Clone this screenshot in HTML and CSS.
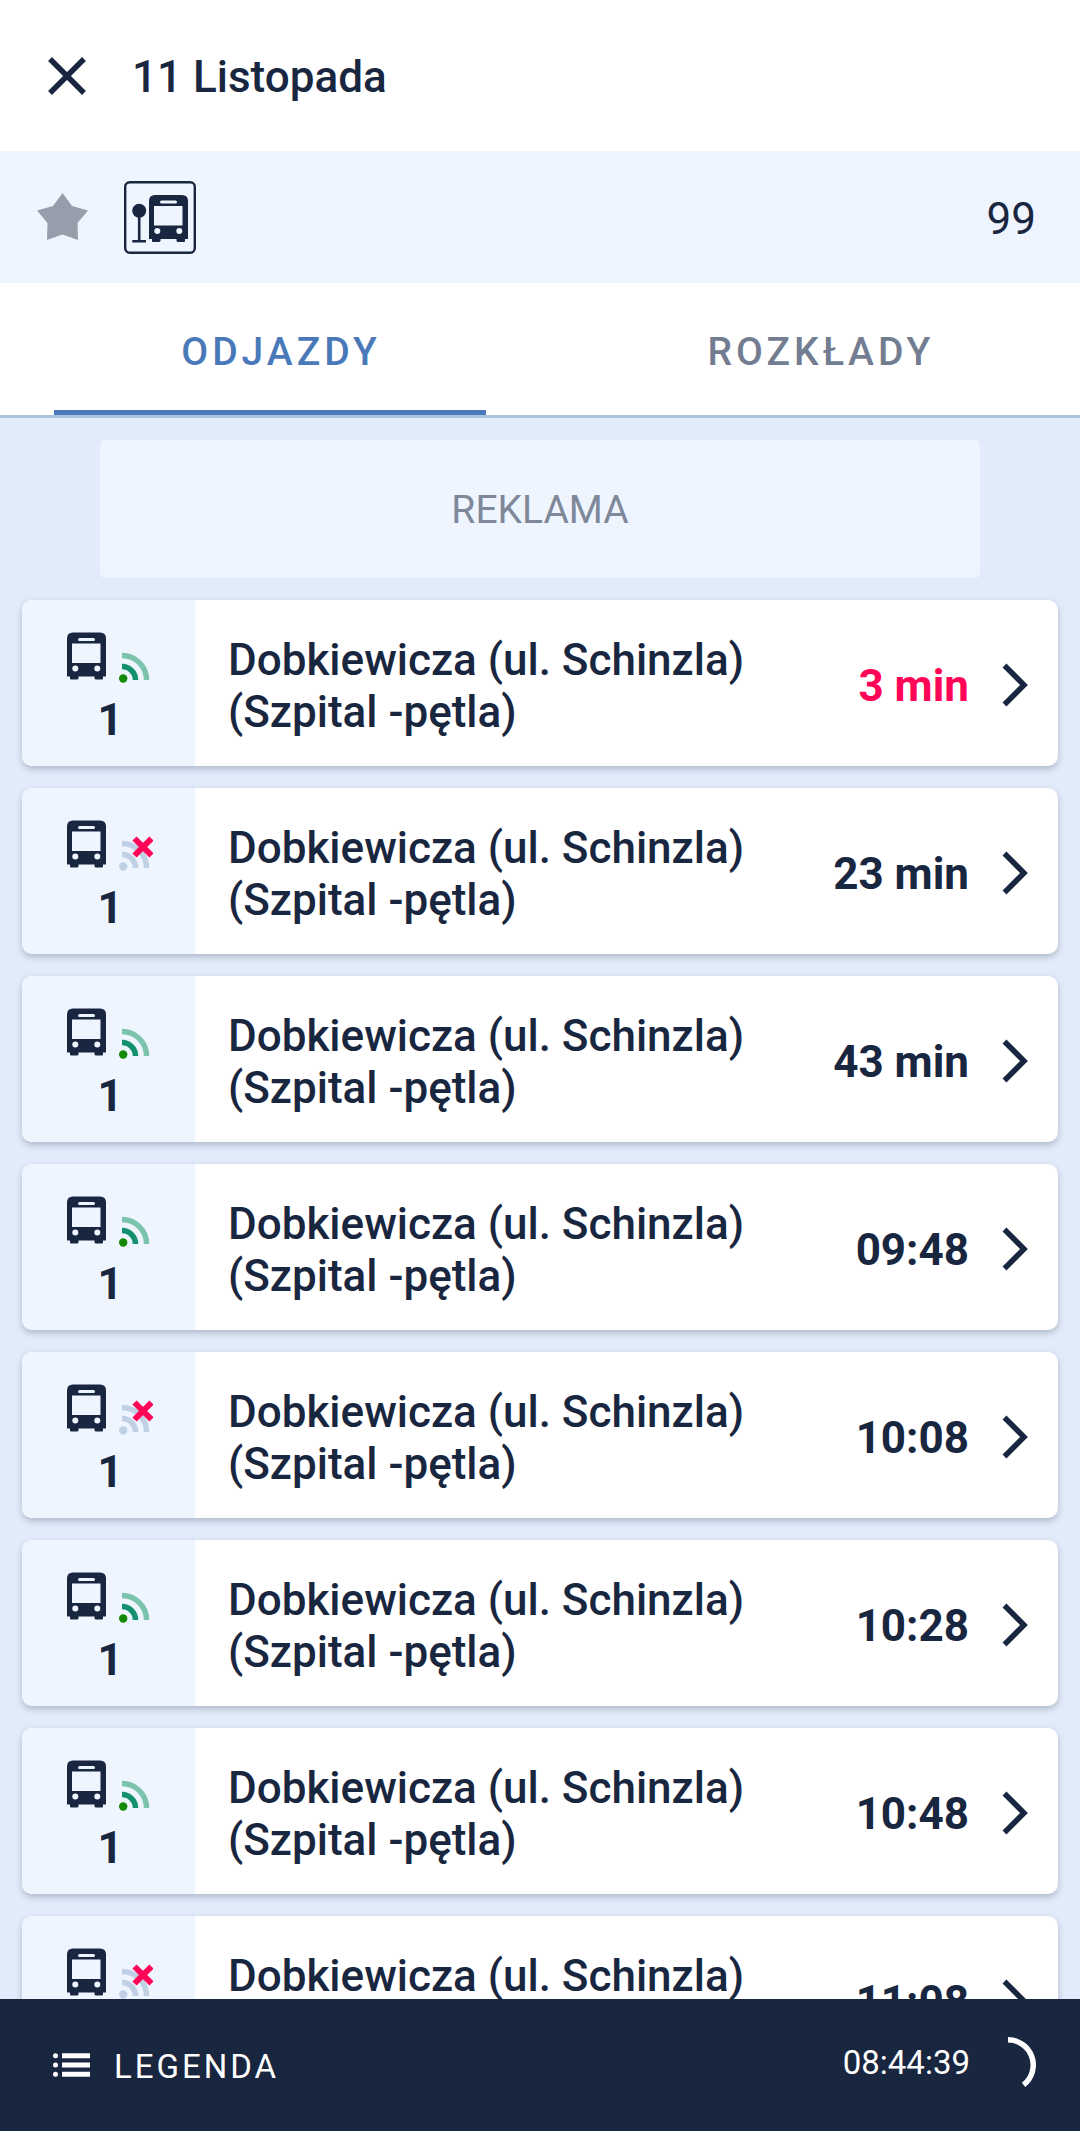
FILE: index.html
```html
<!DOCTYPE html>
<html lang="pl">
<head>
<meta charset="utf-8">
<meta name="viewport" content="width=device-width, initial-scale=1">
<title>11 Listopada</title>
<link rel="stylesheet" href="styles.css">
</head>
<body>
<svg class="symbols" aria-hidden="true">
  <symbol id="bus" viewBox="0 0 39 47">
    <path fill="currentColor" fill-rule="evenodd" d="M6 0H33Q39 0 39 6V44H36V46Q36 47 35 47H29Q28 47 27.500 46V44H11.500V46Q11 47 10 47H4Q3 47 3 46V44H0V6Q0 0 6 0ZM12.500 5.500a1.500 1.500 0 0 0 0 3H26.500a1.500 1.500 0 0 0 0-3ZM5 11V30.500H33.500V11ZM8.300 33a3 3 0 1 0 0 6a3 3 0 0 0 0-6ZM30.300 33a3 3 0 1 0 0 6a3 3 0 0 0 0-6Z"/>
  </symbol>
  <symbol id="live" viewBox="0 0 34 38">
    <g fill="none" stroke-width="5.500">
      <path class="wave-far" d="M3 7.500A24.500 24.500 0 0 1 27.500 32"/>
      <path class="wave-near" d="M3 18.500A13.500 13.500 0 0 1 16.500 32"/>
    </g>
    <circle class="wave-dot" cx="4.200" cy="30.500" r="4.200"/>
  </symbol>
  <symbol id="cross" viewBox="0 0 34 38">
    <path fill="none" stroke="#ff0558" stroke-width="6" d="M15.500 2.500L32.500 19.500M32.500 2.500L15.500 19.500"/>
  </symbol>
  <symbol id="chevron" viewBox="0 0 26 44">
    <path fill="none" stroke="currentColor" stroke-width="5.500" d="M2.500 2.500L22 22L2.500 41.500"/>
  </symbol>
</svg>

<header class="header">
  <button class="close" type="button" aria-label="Zamknij">
    <svg width="38" height="38" viewBox="0 0 38 38"><path fill="none" stroke="currentColor" stroke-width="5.500" d="M2 2L36 36M36 2L2 36"/></svg>
  </button>
  <h1 class="title">11 Listopada</h1>
</header>

<section class="stop">
  <button class="star" type="button" aria-label="Dodaj do ulubionych">
    <svg width="51" height="47" viewBox="0 0 51 47"><path fill="#979eab" d="M25.500 0L35 13L51 17.500L40.500 30L41 47L25.500 41.500L10 47L10.500 30L0 17.500L16 13Z"/></svg>
  </button>
  <svg class="stop-icon" width="72" height="73" viewBox="0 0 72 73" role="img" aria-label="Przystanek autobusowy">
    <rect x="1.200" y="1.200" width="69.600" height="70.600" rx="4.500" fill="none" stroke="currentColor" stroke-width="2.400"/>
    <circle cx="15.200" cy="29.700" r="7" fill="currentColor"/>
    <path fill="currentColor" d="M13.900 35H16.500V59H22V61.500H8.300V59H13.900Z"/>
    <use href="#bus" x="25" y="14" width="39" height="47"/>
  </svg>
  <span class="stop-number">99</span>
</section>

<nav class="tabs">
  <a class="tab active" href="#odjazdy" aria-current="page">ODJAZDY</a>
  <a class="tab" href="#rozklady">ROZKŁADY</a>
</nav>

<main class="board" id="odjazdy">
  <div class="ad">REKLAMA</div>
  <a class="card" href="#kurs"><span class="line"><span class="icons"><svg class="bus"><use href="#bus"/></svg><svg class="signal"><use href="#live"/></svg></span><b class="number">1</b></span><span class="direction">Dobkiewicza (ul. Schinzla) (Szpital -pętla)</span><span class="time soon">3 min</span><svg class="chevron"><use href="#chevron"/></svg></a>
  <a class="card" href="#kurs"><span class="line"><span class="icons"><svg class="bus"><use href="#bus"/></svg><svg class="signal off"><use href="#live"/><use href="#cross"/></svg></span><b class="number">1</b></span><span class="direction">Dobkiewicza (ul. Schinzla) (Szpital -pętla)</span><span class="time">23 min</span><svg class="chevron"><use href="#chevron"/></svg></a>
  <a class="card" href="#kurs"><span class="line"><span class="icons"><svg class="bus"><use href="#bus"/></svg><svg class="signal"><use href="#live"/></svg></span><b class="number">1</b></span><span class="direction">Dobkiewicza (ul. Schinzla) (Szpital -pętla)</span><span class="time">43 min</span><svg class="chevron"><use href="#chevron"/></svg></a>
  <a class="card" href="#kurs"><span class="line"><span class="icons"><svg class="bus"><use href="#bus"/></svg><svg class="signal"><use href="#live"/></svg></span><b class="number">1</b></span><span class="direction">Dobkiewicza (ul. Schinzla) (Szpital -pętla)</span><span class="time">09:48</span><svg class="chevron"><use href="#chevron"/></svg></a>
  <a class="card" href="#kurs"><span class="line"><span class="icons"><svg class="bus"><use href="#bus"/></svg><svg class="signal off"><use href="#live"/><use href="#cross"/></svg></span><b class="number">1</b></span><span class="direction">Dobkiewicza (ul. Schinzla) (Szpital -pętla)</span><span class="time">10:08</span><svg class="chevron"><use href="#chevron"/></svg></a>
  <a class="card" href="#kurs"><span class="line"><span class="icons"><svg class="bus"><use href="#bus"/></svg><svg class="signal"><use href="#live"/></svg></span><b class="number">1</b></span><span class="direction">Dobkiewicza (ul. Schinzla) (Szpital -pętla)</span><span class="time">10:28</span><svg class="chevron"><use href="#chevron"/></svg></a>
  <a class="card" href="#kurs"><span class="line"><span class="icons"><svg class="bus"><use href="#bus"/></svg><svg class="signal"><use href="#live"/></svg></span><b class="number">1</b></span><span class="direction">Dobkiewicza (ul. Schinzla) (Szpital -pętla)</span><span class="time">10:48</span><svg class="chevron"><use href="#chevron"/></svg></a>
  <a class="card" href="#kurs"><span class="line"><span class="icons"><svg class="bus"><use href="#bus"/></svg><svg class="signal off"><use href="#live"/><use href="#cross"/></svg></span><b class="number">1</b></span><span class="direction">Dobkiewicza (ul. Schinzla) (Szpital -pętla)</span><span class="time">11:08</span><svg class="chevron"><use href="#chevron"/></svg></a>
</main>

<footer class="footer">
  <button class="legend" type="button">
    <svg width="37" height="24" viewBox="0 0 37 24" fill="currentColor"><circle cx="2.500" cy="2.800" r="2.500"/><circle cx="2.500" cy="12" r="2.500"/><circle cx="2.500" cy="21.200" r="2.500"/><path d="M9 .3H37V5.300H9ZM9 9.500H37V14.500H9ZM9 18.700H37V23.700H9Z"/></svg>
    <span class="legend-label">LEGENDA</span>
  </button>
  <span class="clock">08:44:39</span>
  <svg class="spinner" width="56" height="56" viewBox="0 0 56 56"><path fill="none" stroke="currentColor" stroke-width="5.500" d="M28 2.800A25.200 25.200 0 0 1 43.500 47.900"/></svg>
</footer>
</body>
</html>
```
FILE: styles.css
```css
* { box-sizing: border-box; }

body {
  --navy: #192640;
  --blue: #4a79b9;
  --pale: #eef5ff;
  --page: #e2ebfa;
  margin: 0;
  height: 100vh;
  display: flex;
  flex-direction: column;
  overflow: hidden;
  background: var(--page);
  color: var(--navy);
  font: 400 44px/52px Roboto, "Noto Sans", sans-serif;
}

a { color: inherit; text-decoration: none; }

button {
  padding: 0;
  border: 0;
  background: none;
  color: inherit;
  font: inherit;
}

svg { display: block; flex: none; }

.symbols { position: absolute; width: 0; height: 0; }

.header, .stop, .tabs, .footer {
  flex: none;
  display: flex;
  align-items: center;
}

.header {
  height: 151px;
  padding: 0 48px;
  gap: 46px;
  background: #fff;
}

.title { margin: 0; padding-top: 2px; font-size: 44px; font-weight: 500; }

.stop {
  height: 132px;
  padding: 0 44px 0 37px;
  gap: 36px;
  background: var(--pale);
}

.star { padding-bottom: 2px; }

.stop-number { margin-left: auto; padding-top: 4px; }

.tabs {
  align-items: stretch;
  height: 135px;
  padding: 0 54px;
  gap: 108px;
  border-bottom: 3px solid #adc3e2;
  background: #fff;
}

.tab {
  flex: 1;
  display: flex;
  align-items: center;
  justify-content: center;
  padding: 10px 0 0 22px;
  border-bottom: 5px solid transparent;
  color: #737d91;
  font-size: 39px;
  font-weight: 500;
  letter-spacing: 4px;
}

.tab.active { border-color: var(--blue); color: var(--blue); }

.board {
  flex: 1;
  min-height: 0;
  display: flex;
  flex-direction: column;
  gap: 22px;
  padding: 22px;
  overflow-y: auto;
  scrollbar-width: none;
}

.ad {
  flex: none;
  align-self: center;
  display: grid;
  place-items: center;
  width: 85%;
  height: 138px;
  padding-top: 2px;
  border-radius: 5px;
  background: var(--pale);
  color: #7e8899;
  font-size: 39px;
}

.card {
  flex: none;
  display: flex;
  align-items: center;
  min-height: 166px;
  padding-right: 30px;
  border-radius: 10px;
  background: #fff;
  box-shadow: 0 3px 6px rgba(25, 38, 64, .25);
}

.line {
  align-self: stretch;
  width: 173px;
  display: flex;
  flex-direction: column;
  align-items: center;
  padding: 32px 0 0 3px;
  gap: 8px;
  border-radius: 10px 0 0 10px;
  background: var(--pale);
}

.icons { display: flex; gap: 13px; }

.bus { width: 39px; height: 48px; }

.signal { width: 34px; height: 38px; margin-top: 16px; overflow: visible; }

.wave-far { stroke: var(--far, #7bc3ad); }
.wave-near { stroke: var(--near, #14906f); }
.wave-dot { fill: var(--dot, #138a05); }

.off { --far: #c0d0e5; --near: #c0d0e5; --dot: #c0d0e5; }

.number { font-weight: 700; }

.direction { flex: 1; padding: 5px 60px 0 33px; font-weight: 500; }

.time { padding-top: 5px; font-weight: 700; }

.soon { color: #ff0558; }

.chevron { width: 26px; height: 44px; margin: 3px 0 0 33px; }

.footer {
  height: 132px;
  padding: 0 44px 0 53px;
  background: var(--navy);
  color: #fff;
  font-size: 33px;
}

.legend {
  display: flex;
  align-items: center;
  gap: 24px;
  letter-spacing: 3px;
}

.legend-label { padding-top: 4px; }

.clock { margin-left: auto; padding-bottom: 5px; }

.spinner { margin-left: 10px; }
```
